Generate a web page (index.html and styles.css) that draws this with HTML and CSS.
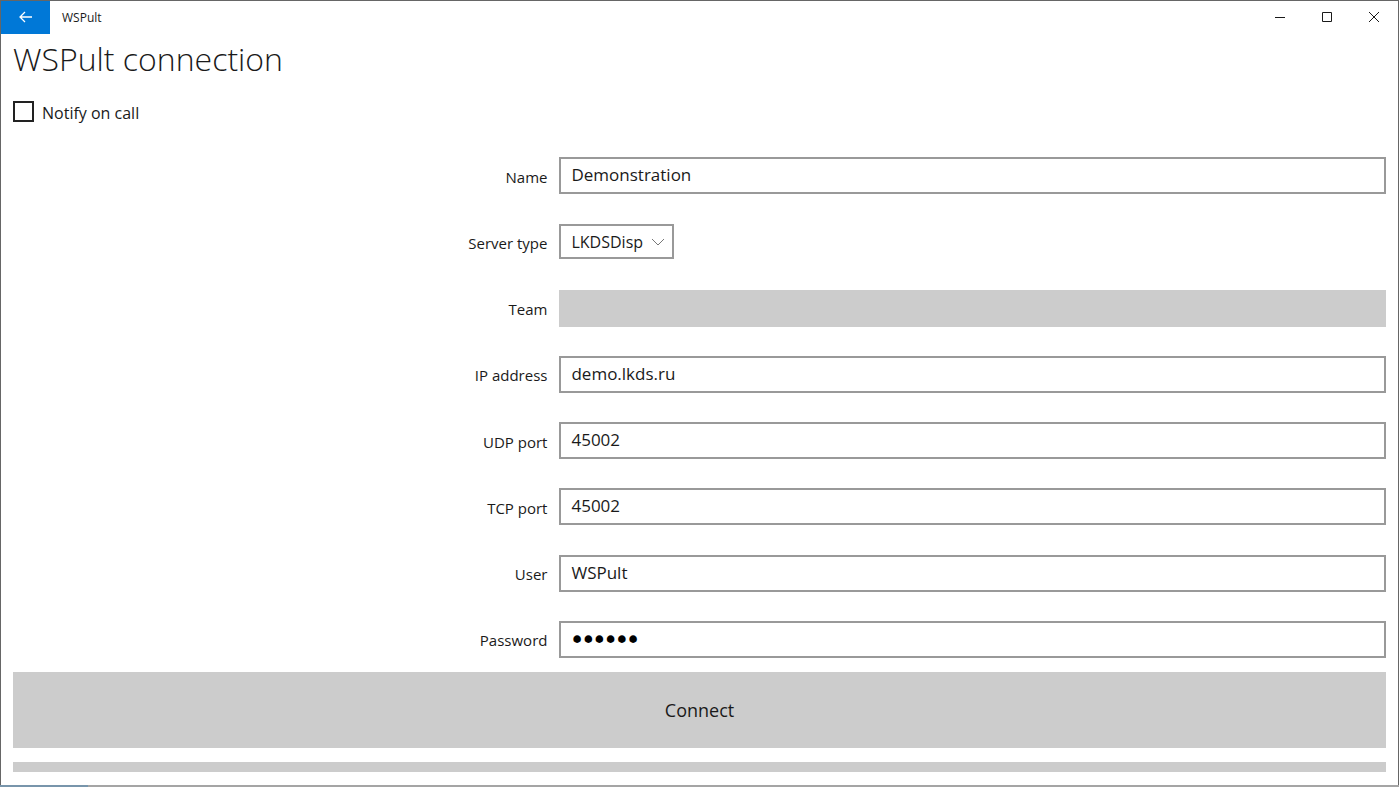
FILE: index.html
```
<!DOCTYPE html>
<html lang="en">
<head>
    <meta charset="utf-8">
    <title>WSPult</title>
    <link rel="stylesheet" href="styles.css">
</head>
<body>
<div class="window">
    <header class="titlebar">
        <button class="back" type="button" aria-label="Back">
            <svg width="14" height="12" viewBox="0 0 14 12"><path d="M1 6H13M6 1L1 6l5 5"/></svg>
        </button>
        <span class="title">WSPult</span>
        <div class="window-buttons">
            <button type="button" aria-label="Minimize">
                <svg width="12" height="12" viewBox="0 0 12 12"><path d="M1 6.500H11"/></svg>
            </button>
            <button type="button" aria-label="Maximize">
                <svg width="12" height="12" viewBox="0 0 12 12"><path d="M1.500 1.500h9v9h-9z"/></svg>
            </button>
            <button type="button" aria-label="Close">
                <svg width="12" height="12" viewBox="0 0 12 12"><path d="M1 1l10 10M11 1L1 11"/></svg>
            </button>
        </div>
    </header>

    <form class="page">
        <h1>WSPult connection</h1>
        <div class="notify">
            <input type="checkbox" id="notify">
            <label for="notify">Notify on call</label>
        </div>

        <!-- Connection settings -->
        <div class="fields">
            <div class="field">
                <label for="name">Name</label>
                <input type="text" id="name" value="Demonstration">
            </div>
            <div class="field">
                <label for="serverType">Server type</label>
                <div class="select-box">
                    <select id="serverType">
                        <option>LKDSDisp</option>
                    </select>
                    <svg width="14" height="8" viewBox="0 0 14 8"><path d="M1 1l6 6 6-6"/></svg>
                </div>
            </div>
            <div class="field">
                <label for="team">Team</label>
                <input type="text" id="team" disabled>
            </div>
            <div class="field">
                <label for="ip">IP address</label>
                <input type="text" id="ip" value="demo.lkds.ru">
            </div>
            <div class="field">
                <label for="udp">UDP port</label>
                <input type="text" id="udp" value="45002">
            </div>
            <div class="field">
                <label for="tcp">TCP port</label>
                <input type="text" id="tcp" value="45002">
            </div>
            <div class="field">
                <label for="user">User</label>
                <input type="text" id="user" value="WSPult">
            </div>
            <div class="field">
                <label for="password">Password</label>
                <input type="password" id="password" value="wspult">
            </div>
        </div>

        <button class="connect" type="button">Connect</button>
        <div class="bottom-bar"></div>
    </form>
</div>
<div class="desktop-edge"></div>
</body>
</html>
```

FILE: styles.css
```
* {
    box-sizing: border-box;
}

body {
    margin: 0;
    min-height: 100vh;
    display: flex;
    flex-direction: column;
    background: #fff;
    color: #1a1a1a;
    font-family: "Open Sans", "Noto Sans", sans-serif;
}

button, input, select {
    font-family: inherit;
    color: inherit;
    border-radius: 0;
}

svg {
    fill: none;
    stroke: currentColor;
}

.window {
    flex: 1;
    display: flex;
    flex-direction: column;
    border: 1px solid #666;
    border-bottom: none;
}

/* Title bar */
.titlebar {
    display: flex;
    align-items: center;
    height: 33px;
}

.back {
    display: flex;
    align-items: center;
    justify-content: center;
    width: 49px;
    height: 33px;
    padding: 0 0 2px;
    border: none;
    background: #0078d7;
    color: #fff;
}

.back svg {
    stroke-width: 1.3;
}

.title {
    margin-left: 12px;
    font-size: 12px;
    line-height: 16px;
}

.window-buttons {
    display: flex;
    margin-left: auto;
}

.window-buttons button {
    display: flex;
    align-items: center;
    justify-content: center;
    width: 47px;
    height: 33px;
    padding: 0 2px 2px 0;
    border: none;
    background: none;
}

/* Page content */
.page {
    flex: 1;
    display: flex;
    flex-direction: column;
    padding: 0 12px 13px;
}

h1 {
    margin: 0;
    font-size: 32px;
    font-weight: 300;
    line-height: 50px;
}

.notify {
    display: flex;
    align-items: center;
    gap: 8px;
    margin: 15px 0 34px;
    font-size: 16px;
    line-height: 20px;
}

.notify label {
    padding-top: 4px;
}

.notify input {
    appearance: none;
    width: 21px;
    height: 21px;
    margin: 0;
    border: 2px solid #222;
}

.fields {
    flex: 1;
    display: flex;
    flex-direction: column;
    justify-content: space-between;
    margin-bottom: 14px;
}

.field {
    display: grid;
    grid-template-columns: 39.8% 1fr;
    align-items: center;
    height: 37px;
}

.field label {
    padding: 2px 12px 0 0;
    text-align: right;
    font-size: 15px;
    line-height: 22px;
}

.field input {
    width: 100%;
    height: 37px;
    padding: 0 10px 2px;
    border: 2px solid #999;
    background: #fff;
    font-size: 17px;
}

.field input:disabled {
    border-color: #ccc;
    background: #ccc;
}

.field input[type="password"] {
    padding-bottom: 0;
    color: #000;
    font-family: "DejaVu Sans", sans-serif;
    font-size: 19px;
    -webkit-text-stroke: 2px #000;
}

.select-box {
    display: flex;
    align-items: center;
    justify-self: start;
    position: relative;
}

.select-box select {
    appearance: none;
    width: 115px;
    height: 35px;
    padding: 0 10px;
    border: 2px solid #999;
    background: #fff;
    font-size: 16px;
}

/* Arrow lies over the select */
.select-box svg {
    position: absolute;
    right: 9px;
    color: #777;
    pointer-events: none;
}

.connect {
    height: 76px;
    border: none;
    background: #ccc;
    font-size: 18px;
}

.bottom-bar {
    height: 10px;
    margin-top: 14px;
    background: #ccc;
}

.desktop-edge {
    height: 2px;
    background: linear-gradient(90deg, #7895ab 88px, #a5a5a5 88px);
}
```
